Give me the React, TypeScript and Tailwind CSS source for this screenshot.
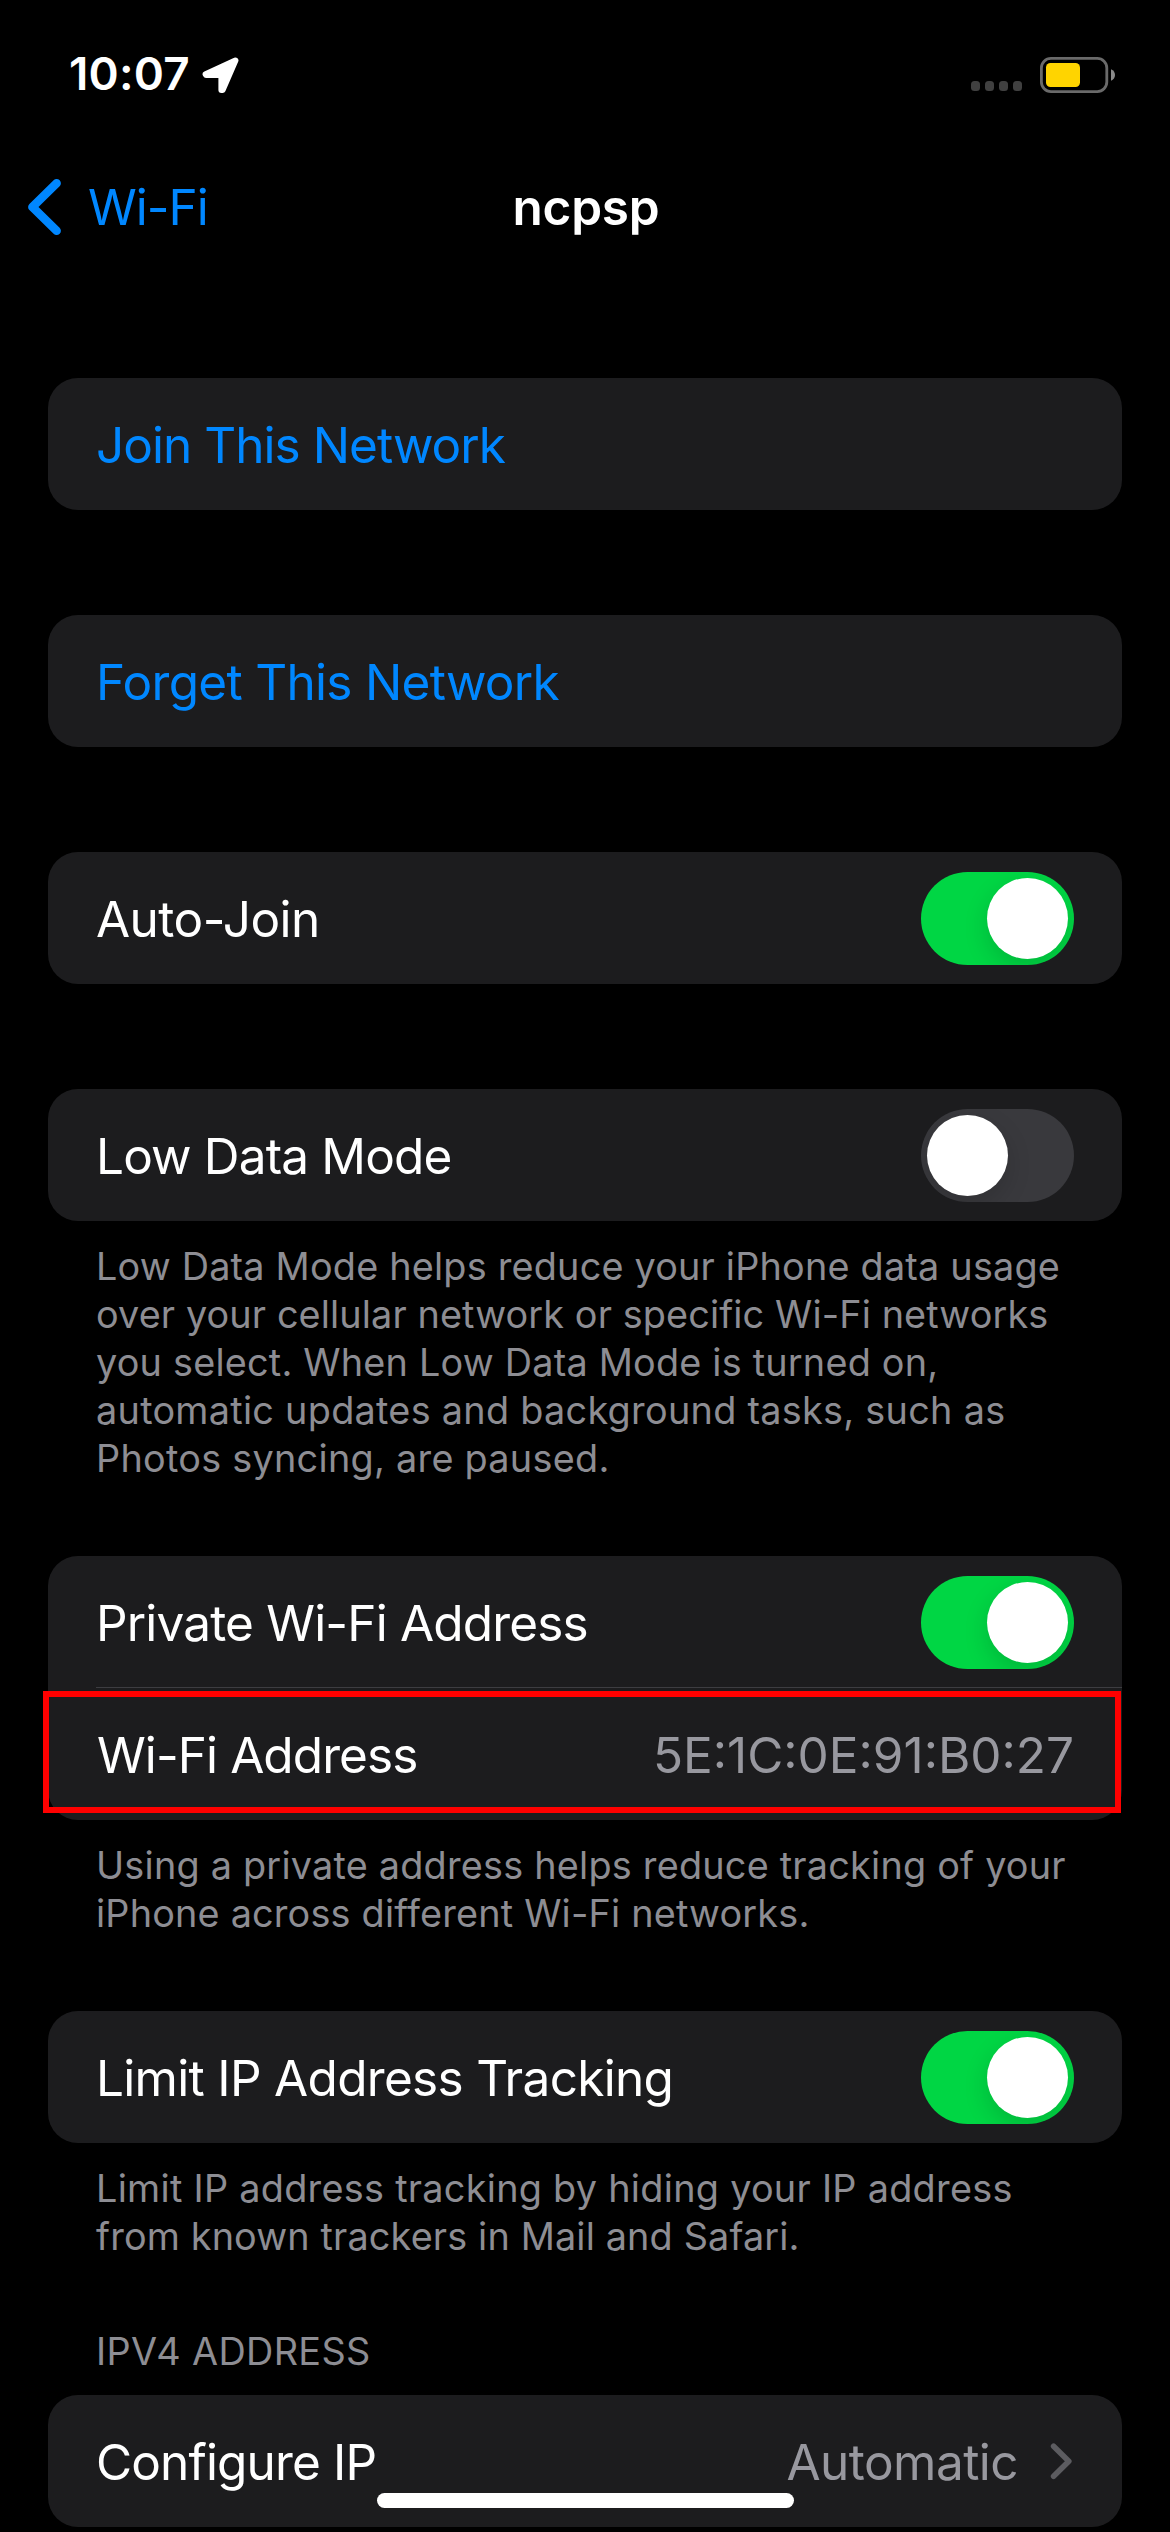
import type { ReactNode } from "react";

function Card({ children }: { children: ReactNode }) {
  return <div className="relative rounded-[30px] bg-[#1c1c1e]">{children}</div>;
}

function Row({ children }: { children: ReactNode }) {
  return (
    <div className="flex h-[132px] items-start justify-between px-12 text-[49.5px] leading-[134px] whitespace-nowrap">
      {children}
    </div>
  );
}

function Toggle({ on }: { on: boolean }) {
  return (
    <span
      role="switch"
      aria-checked={on}
      className={
        on
          ? "mt-5 flex h-[93px] w-[153px] shrink-0 justify-end overflow-hidden rounded-full bg-[#00d644] p-1.5"
          : "mt-5 flex h-[93px] w-[153px] shrink-0 justify-start overflow-hidden rounded-full bg-[#39393d] p-1.5"
      }
    >
      <span className="size-[81px] rounded-full bg-white shadow-[0_9px_24px_rgba(0,0,0,0.15)]" />
    </span>
  );
}

function Footer({ children }: { children: ReactNode }) {
  return (
    <p className="mt-[21px] mb-[74px] px-12 text-[37.8px] leading-[48px] whitespace-nowrap text-[#8d8d93]">
      {children}
    </p>
  );
}

function LocationArrow() {
  return (
    <svg className="ml-[12px]" width="38" height="37" viewBox="0 0 38 37" fill="#fff" stroke="#fff" strokeWidth="6" strokeLinejoin="round">
      <path d="M33.4 4.6 L3.6 18.2 L4 19 H19.4 V34 L20.6 34 Z" />
    </svg>
  );
}

function Battery() {
  return (
    <svg className="ml-[18px]" width="76" height="36" viewBox="0 0 76 36">
      <rect x="1.4" y="1.4" width="65.4" height="33.2" rx="9.5" fill="none" stroke="#6a6a6a" strokeWidth="2.8" />
      <rect x="6" y="6" width="34" height="24" rx="4.5" fill="#ffd400" />
      <path d="M71 12.2 C73.6 13.2 75 15.4 75 18 C75 20.6 73.6 22.8 71 23.8 Z" fill="#8a8a8a" />
    </svg>
  );
}

export default function App() {
  return (
    <div className="relative h-[2532px] w-[1170px] overflow-hidden bg-black font-['Inter',sans-serif] text-white">
      <div className="flex h-[149px] items-center pr-[54px] pl-[69px]">
        <span className="text-[45.8px] font-semibold tracking-[0.2px]">10:07</span>
        <LocationArrow />
        <div className="mt-[23px] ml-auto flex gap-[4.5px]">
          <span className="size-[9.5px] rounded-[3.5px] bg-[#404040]" />
          <span className="size-[9.5px] rounded-[3.5px] bg-[#404040]" />
          <span className="size-[9.5px] rounded-[3.5px] bg-[#404040]" />
          <span className="size-[9.5px] rounded-[3.5px] bg-[#404040]" />
        </div>
        <Battery />
      </div>

      <div className="grid h-[116px] grid-cols-[1fr_auto_1fr] items-center text-[49.5px]">
        <div className="flex items-center pl-[26px] text-[#0087ff]">
          <svg width="40" height="60" viewBox="0 0 40 60" fill="none" stroke="currentColor" strokeWidth="8.6" strokeLinecap="round" strokeLinejoin="round">
            <path d="M30.6 6.2 L6.4 30 L30.6 53.8" />
          </svg>
          <span className="ml-[22px] tracking-[-1px]">Wi-Fi</span>
        </div>
        <h1 className="translate-x-[1px] font-semibold tracking-[-0.2px]">ncpsp</h1>
        <div />
      </div>

      <main className="mt-[113px] px-12">
        <Card>
          <Row>
            <span className="tracking-[-0.96px] text-[#0087ff]">Join This Network</span>
          </Row>
        </Card>

        <div className="mt-[105px]">
          <Card>
            <Row>
              <span className="tracking-[-0.7px] text-[#0087ff]">Forget This Network</span>
            </Row>
          </Card>
        </div>

        <div className="mt-[105px]">
          <Card>
            <Row>
              <span className="tracking-[-0.53px]">Auto-Join</span>
              <Toggle on />
            </Row>
          </Card>
        </div>

        <div className="mt-[105px]">
          <Card>
            <Row>
              <span className="tracking-[-0.84px]">Low Data Mode</span>
              <Toggle on={false} />
            </Row>
          </Card>
        </div>
        <Footer>
          <span className="block tracking-[0.2px]">Low Data Mode helps reduce your iPhone data usage</span>
          <span className="block tracking-[0.12px]">over your cellular network or specific Wi-Fi networks</span>
          <span className="block tracking-[0.21px]">you select. When Low Data Mode is turned on,</span>
          <span className="block tracking-[0.28px]">automatic updates and background tasks, such as</span>
          <span className="block tracking-[0.27px]">Photos syncing, are paused.</span>
        </Footer>

        <Card>
          <Row>
            <span className="tracking-[-0.83px]">Private Wi-Fi Address</span>
            <Toggle on />
          </Row>
          <div className="-mt-px ml-12 h-px bg-[#3d3d41]" />
          <Row>
            <span className="pl-px tracking-[-0.92px]">Wi-Fi Address</span>
            <span className="text-[#98989f]">5E:1C:0E:91:B0:27</span>
          </Row>
          <div className="absolute top-[135px] -left-[5px] h-[122px] w-[1078px] border-[6px] border-[#ff0000]" />
        </Card>
        <Footer>
          <span className="block tracking-[0.22px]">Using a private address helps reduce tracking of your</span>
          <span className="block tracking-[0.19px]">iPhone across different Wi-Fi networks.</span>
        </Footer>

        <Card>
          <Row>
            <span className="tracking-[-0.69px]">Limit IP Address Tracking</span>
            <Toggle on />
          </Row>
        </Card>
        <Footer>
          <span className="block tracking-[0.28px]">Limit IP address tracking by hiding your IP address</span>
          <span className="block tracking-[0.15px]">from known trackers in Mail and Safari.</span>
        </Footer>

        <h2 className="-mt-[7px] mb-5 px-12 text-[37.8px] leading-[48px] tracking-[0.36px] text-[#8d8d93]">IPV4 ADDRESS</h2>
        <Card>
          <Row>
            <span className="tracking-[-0.86px]">Configure IP</span>
            <span className="flex items-start text-[#98989f]">
              <span className="tracking-[-0.54px]">Automatic</span>
              <svg className="mt-12 ml-8" width="24" height="37" viewBox="0 0 24 37" fill="none" stroke="#5c5c60" strokeWidth="5.6" strokeLinecap="round" strokeLinejoin="round">
                <path d="M3.6 3.2 L18.8 18.2 L3.6 33.2" />
              </svg>
            </span>
          </Row>
        </Card>
      </main>

      <div className="absolute bottom-6 left-[377px] h-[15px] w-[417px] rounded-full bg-white" />
    </div>
  );
}
